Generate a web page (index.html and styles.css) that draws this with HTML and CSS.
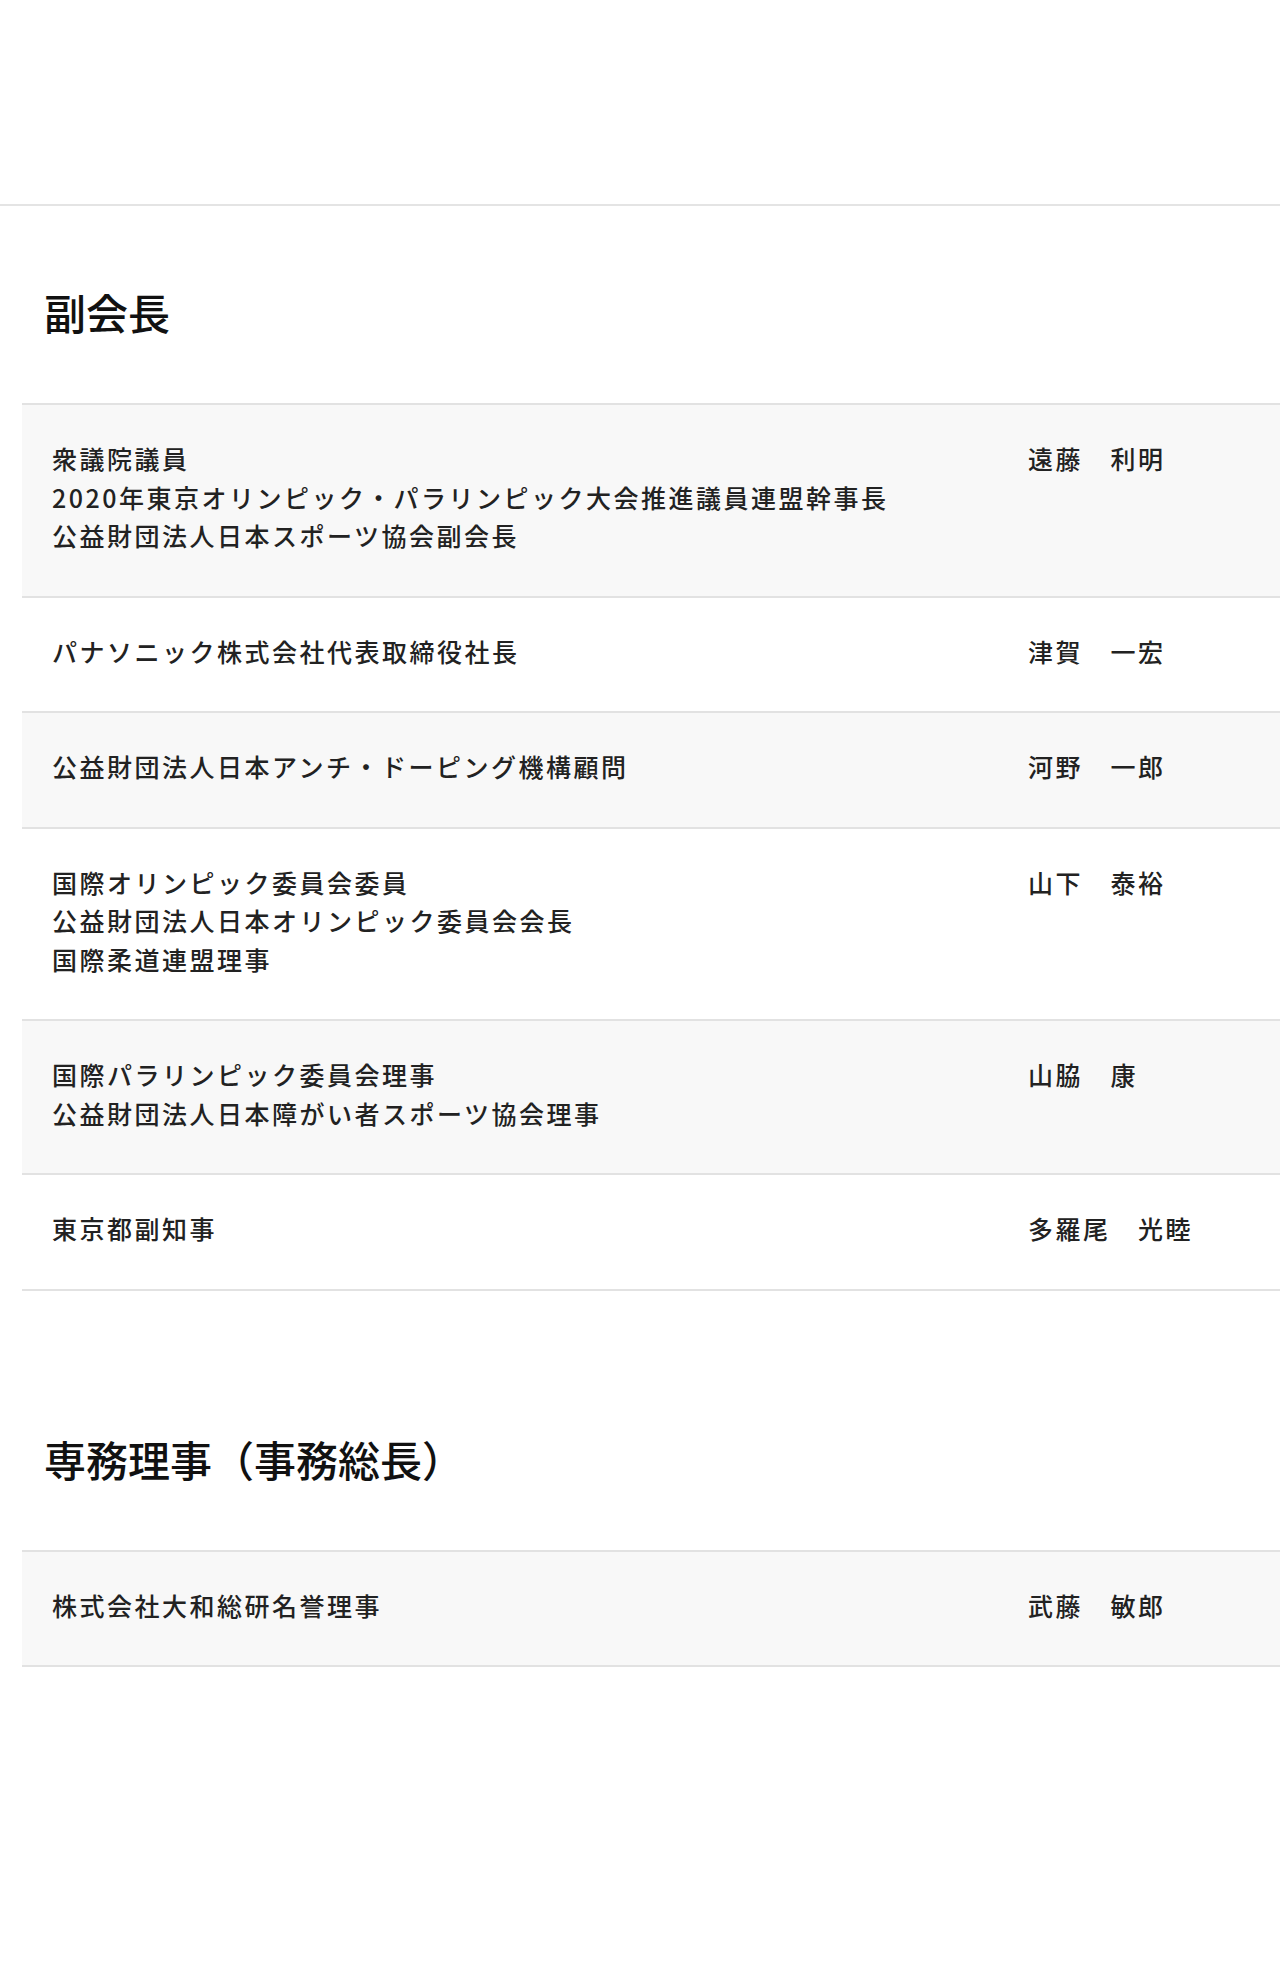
FILE: index.html
```html
<!DOCTYPE html>
<html lang="ja">
<head>
<meta charset="utf-8">
<title>役員</title>
<link rel="stylesheet" href="styles.css">
</head>
<body>
<div class="page">
  <div class="top-space"></div>
  <hr class="divider">

  <section class="section section-first">
    <h2 class="section-title">副会長</h2>
    <div class="roster">
      <div class="row row-shaded">
        <div class="role">衆議院議員<br>2020年東京オリンピック・パラリンピック大会推進議員連盟幹事長<br>公益財団法人日本スポーツ協会副会長</div>
        <div class="name">遠藤　利明</div>
      </div>
      <div class="row">
        <div class="role">パナソニック株式会社代表取締役社長</div>
        <div class="name">津賀　一宏</div>
      </div>
      <div class="row row-shaded">
        <div class="role">公益財団法人日本アンチ・ドーピング機構顧問</div>
        <div class="name">河野　一郎</div>
      </div>
      <div class="row">
        <div class="role">国際オリンピック委員会委員<br>公益財団法人日本オリンピック委員会会長<br>国際柔道連盟理事</div>
        <div class="name">山下　泰裕</div>
      </div>
      <div class="row row-shaded">
        <div class="role">国際パラリンピック委員会理事<br>公益財団法人日本障がい者スポーツ協会理事</div>
        <div class="name">山脇　康</div>
      </div>
      <div class="row">
        <div class="role">東京都副知事</div>
        <div class="name">多羅尾　光睦</div>
      </div>
    </div>
  </section>

  <section class="section section-second">
    <h2 class="section-title">専務理事（事務総長）</h2>
    <div class="roster">
      <div class="row row-shaded">
        <div class="role">株式会社大和総研名誉理事</div>
        <div class="name">武藤　敏郎</div>
      </div>
    </div>
  </section>
</div>
</body>
</html>
```

FILE: styles.css
```css
html, body {
  margin: 0;
  padding: 0;
  background: #ffffff;
}

body {
  font-family: "Noto Sans CJK JP", "Noto Sans", sans-serif;
  color: #1a1a1a;
}

.page {
  width: 1280px;
  min-height: 1980px;
}

.top-space {
  height: 204px;
}

.divider {
  margin: 0;
  border: 0;
  height: 2px;
  background: #e4e4e4;
}

.section-first {
  padding-top: 85px;
}

.section-second {
  padding-top: 147px;
}

.section-title {
  margin: 0;
  padding-left: 44px;
  font-size: 42px;
  line-height: 42px;
  font-weight: 500;
  color: #111111;
  letter-spacing: 0;
}

.roster {
  margin-top: 70px;
  margin-left: 22px;
  border-bottom: 2px solid #e2e2e2;
}

.row {
  display: grid;
  grid-template-columns: 1fr 252px;
  border-top: 2px solid #e2e2e2;
  padding: 34px 0 41px 30px;
  background: #ffffff;
  font-size: 25px;
  line-height: 38.5px;
  letter-spacing: 2.5px;
  font-weight: 500;
  color: #222222;
}

.row-shaded {
  background: #f8f8f8;
}

.role,
.name {
  white-space: nowrap;
}
```
